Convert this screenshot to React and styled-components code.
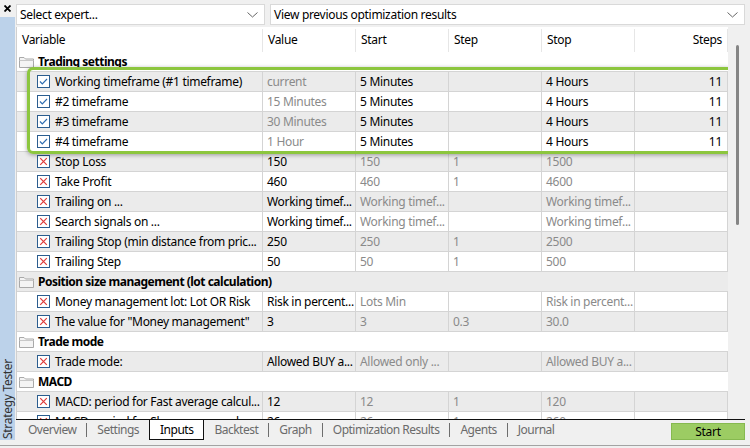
import React from 'react'
import styled, { createGlobalStyle } from 'styled-components'

const GlobalStyle = createGlobalStyle`
  html, body { margin: 0; padding: 0; }
  body {
    width: 750px;
    height: 448px;
    overflow: hidden;
    background: #f0f0f0;
    font-family: "Noto Sans", "Open Sans", sans-serif;
    font-size: 12px;
    letter-spacing: -0.3px;
    color: #000;
  }
  * { box-sizing: border-box; }
`

const COLS = '246px 93px 93px 93px 93px 93px'

const Window = styled.div`
  display: flex;
  width: 750px;
  height: 446px;
  background: #f0f0f0;
  border-bottom: 1px solid #a3a3a3;
`

const Sidebar = styled.div`
  width: 16px;
  flex: none;
  display: flex;
  flex-direction: column;
`

const CloseBox = styled.div`
  height: 17px;
  display: flex;
  align-items: center;
  justify-content: center;
  padding-right: 1px;
`

const SideStrip = styled.div`
  flex: 1;
  margin-right: 1px;
  margin-bottom: 5px;
  background: #bcd2ea;
  display: flex;
  flex-direction: column;
  justify-content: flex-end;
  align-items: center;
  padding-bottom: 1px;
`

const SideLabel = styled.span`
  writing-mode: vertical-rl;
  transform: rotate(180deg);
  color: #333;
  line-height: 15px;
  white-space: nowrap;
`

const Main = styled.div`
  flex: 1;
  min-width: 0;
  display: flex;
  flex-direction: column;
`

const TopBar = styled.div`
  display: flex;
  gap: 5px;
  padding: 4px 5px 0 0;
`

const Select = styled.div`
  width: ${(p) => p.$w}px;
  height: 21px;
  background: #fff;
  border: 1px solid #d9d9d9;
  display: flex;
  align-items: center;
  justify-content: space-between;
  padding: 0 6px 0 3px;
  white-space: nowrap;
`

const TableArea = styled.div`
  flex: 1;
  min-height: 0;
  margin-top: 2px;
  display: flex;
  overflow: hidden;
`

const Table = styled.div`
  width: 712px;
  flex: none;
  border-left: 1px solid #d0d0d0;
  background: #fff;
  display: flex;
  flex-direction: column;
  overflow: hidden;
`

const HeaderRow = styled.div`
  display: grid;
  grid-template-columns: ${COLS};
  height: 25px;
  flex: none;
  background: #fff;
`

const HeaderCell = styled.div`
  padding: ${(p) => (p.$right ? '0 5px 0 0' : '0 0 0 5px')};
  text-align: ${(p) => (p.$right ? 'right' : 'left')};
  border-right: 1px solid #e6e6e6;
  margin: 2px 0 0;
  line-height: 22px;
`

const Body = styled.div`
  position: relative;
  flex: 1;
  overflow: hidden;
`

const Row = styled.div`
  display: grid;
  grid-template-columns: ${COLS};
  height: 20px;
  background: ${(p) => (p.$odd ? '#ebebeb' : '#fff')};
  border-bottom: 1px solid #d4d4d4;
`

const GroupRow = styled.div`
  display: flex;
  align-items: center;
  gap: 4px;
  height: 20px;
  padding-left: 2px;
  font-weight: bold;
  letter-spacing: -0.5px;
  background: ${(p) => (p.$odd ? '#ebebeb' : '#fff')};
  border-bottom: 1px solid #d4d4d4;
`

const Cell = styled.div`
  padding: ${(p) => (p.$right ? '0 5px 0 0' : '0 0 0 4px')};
  text-align: ${(p) => (p.$right ? 'right' : 'left')};
  line-height: 19px;
  color: ${(p) => (p.$dim ? '#8a8a8a' : '#000')};
  border-right: 1px solid #d4d4d4;
  overflow: hidden;
  white-space: nowrap;
`

const NameCell = styled.div`
  display: flex;
  align-items: center;
  gap: 5px;
  padding-left: 20px;
  border-right: 1px solid #d4d4d4;
  overflow: hidden;
  white-space: nowrap;
  line-height: 19px;
`

const Highlight = styled.div`
  position: absolute;
  left: 10px;
  top: 15px;
  width: 706px;
  height: 87px;
  border: 3px solid #8cc63e;
  border-radius: 6px;
  box-shadow: 0 1px 4px rgba(0, 0, 0, 0.35);
  pointer-events: none;
`

const Scrollbar = styled.div`
  width: 20px;
  flex: none;
  background: #f0f0f0;
  padding: 18px 0 0 8px;
`

const Thumb = styled.div`
  width: 3px;
  height: 180px;
  border-radius: 2px;
  background: #858585;
`

const TabBar = styled.div`
  display: flex;
  align-items: flex-start;
  height: 26px;
  margin-right: 5px;
  padding-left: 2px;
  border-top: 1px solid #111;
  flex: none;
`

const Tab = styled.div`
  padding: 0 10px;
  height: 20px;
  line-height: 20px;
  letter-spacing: -0.5px;
  color: ${(p) => (p.$active ? '#000' : '#6b6b6b')};
  background: ${(p) => (p.$active ? '#fff' : 'transparent')};
  border: ${(p) => (p.$active ? '1px solid #111' : 'none')};
  border-top: none;
  white-space: nowrap;
`

const Sep = styled.span`
  width: 1px;
  height: 14px;
  margin-top: 3px;
  background: #6e6e6e;
`

const StartButton = styled.div`
  margin-left: auto;
  margin-top: 3px;
  width: 74px;
  height: 17px;
  background: #9ccc63;
  border: 1px solid #86b94f;
  text-align: center;
  line-height: 15px;
`

const CloseIcon = () => (
  <svg width="7" height="7" viewBox="0 0 7 7">
    <path d="M0.5 0.5 L6.5 6.5 M6.5 0.5 L0.5 6.5" stroke="#000" strokeWidth="1.8" />
  </svg>
)

const Chevron = () => (
  <svg width="11" height="6" viewBox="0 0 11 6">
    <polyline points="0.5,0.5 5.5,5 10.5,0.5" fill="none" stroke="#666" strokeWidth="1" />
  </svg>
)

const Folder = () => (
  <svg width="15" height="12" viewBox="0 0 15 12">
    <path d="M0.5 1.5 H5 L6.5 3 H14.5 V11.5 H0.5 Z" fill="#f4f4f4" stroke="#a9a9a9" />
    <path d="M0.5 4.5 H14.5" stroke="#c8c8c8" />
  </svg>
)

const CheckBox = ({ on }) => (
  <svg width="13" height="13" viewBox="0 0 13 13" style={{ flex: 'none' }}>
    <rect x="0.5" y="0.5" width="12" height="12" fill="#fff" stroke="#2b5d8f" />
    {on ? (
      <polyline points="3,6.5 5.3,8.8 10,4" fill="none" stroke="#2e6db0" strokeWidth="1.2" />
    ) : (
      <path d="M3.2 3.2 L9.8 9.8 M9.8 3.2 L3.2 9.8" stroke="#e03a3a" strokeWidth="1.2" />
    )}
  </svg>
)

const rows = [
  { group: 'Trading settings' },
  { name: 'Working timeframe (#1 timeframe)', on: true, value: 'current', start: '5 Minutes', step: '', stop: '4 Hours', steps: '11' },
  { name: '#2 timeframe', on: true, value: '15 Minutes', start: '5 Minutes', step: '', stop: '4 Hours', steps: '11' },
  { name: '#3 timeframe', on: true, value: '30 Minutes', start: '5 Minutes', step: '', stop: '4 Hours', steps: '11' },
  { name: '#4 timeframe', on: true, value: '1 Hour', start: '5 Minutes', step: '', stop: '4 Hours', steps: '11' },
  { name: 'Stop Loss', value: '150', start: '150', step: '1', stop: '1500' },
  { name: 'Take Profit', value: '460', start: '460', step: '1', stop: '4600' },
  { name: 'Trailing on ...', value: 'Working timef...', start: 'Working timef...', step: '', stop: 'Working timef...' },
  { name: 'Search signals on ...', value: 'Working timef...', start: 'Working timef...', step: '', stop: 'Working timef...' },
  { name: 'Trailing Stop (min distance from pric...', value: '250', start: '250', step: '1', stop: '2500' },
  { name: 'Trailing Step', value: '50', start: '50', step: '1', stop: '500' },
  { group: 'Position size management (lot calculation)' },
  { name: 'Money management lot: Lot OR Risk', value: 'Risk in percent...', start: 'Lots Min', step: '', stop: 'Risk in percent...' },
  { name: 'The value for "Money management"', value: '3', start: '3', step: '0.3', stop: '30.0' },
  { group: 'Trade mode' },
  { name: 'Trade mode:', value: 'Allowed BUY a...', start: 'Allowed only ...', step: '', stop: 'Allowed BUY a...' },
  { group: 'MACD' },
  { name: 'MACD: period for Fast average calcul...', value: '12', start: '12', step: '1', stop: '120' },
  { name: 'MACD: period for Slow average calcu...', value: '26', start: '26', step: '1', stop: '260' },
]

const tabs = ['Overview', 'Settings', 'Inputs', 'Backtest', 'Graph', 'Optimization Results', 'Agents', 'Journal']
const activeTab = 'Inputs'

const App = () => {
  return (
    <>
      <GlobalStyle />
      <Window>
        <Sidebar>
          <CloseBox><CloseIcon /></CloseBox>
          <SideStrip>
            <SideLabel>Strategy Tester</SideLabel>
          </SideStrip>
        </Sidebar>
        <Main>
          <TopBar>
            <Select $w={249}>Select expert...<Chevron /></Select>
            <Select $w={475}>View previous optimization results<Chevron /></Select>
          </TopBar>
          <TableArea>
            <Table>
              <HeaderRow>
                <HeaderCell>Variable</HeaderCell>
                <HeaderCell>Value</HeaderCell>
                <HeaderCell>Start</HeaderCell>
                <HeaderCell>Step</HeaderCell>
                <HeaderCell>Stop</HeaderCell>
                <HeaderCell $right>Steps</HeaderCell>
              </HeaderRow>
              <Body>
                {rows.map((r, i) =>
                  r.group ? (
                    <GroupRow key={i} $odd={i % 2 === 1}>
                      <Folder />
                      {r.group}
                    </GroupRow>
                  ) : (
                    <Row key={i} $odd={i % 2 === 1}>
                      <NameCell>
                        <CheckBox on={r.on} />
                        {r.name}
                      </NameCell>
                      <Cell $dim={r.on}>{r.value}</Cell>
                      <Cell $dim={!r.on}>{r.start}</Cell>
                      <Cell $dim={!r.on}>{r.step}</Cell>
                      <Cell $dim={!r.on}>{r.stop}</Cell>
                      <Cell $right>{r.steps}</Cell>
                    </Row>
                  )
                )}
                <Highlight />
              </Body>
            </Table>
            <Scrollbar><Thumb /></Scrollbar>
          </TableArea>
          <TabBar>
            {tabs.map((t, i) => {
              const prev = tabs[i - 1]
              const showSep = i > 0 && t !== activeTab && prev !== activeTab
              return (
                <React.Fragment key={t}>
                  {showSep && <Sep />}
                  <Tab $active={t === activeTab}>{t}</Tab>
                </React.Fragment>
              )
            })}
            <StartButton>Start</StartButton>
          </TabBar>
        </Main>
      </Window>
    </>
  )
}

export default App
